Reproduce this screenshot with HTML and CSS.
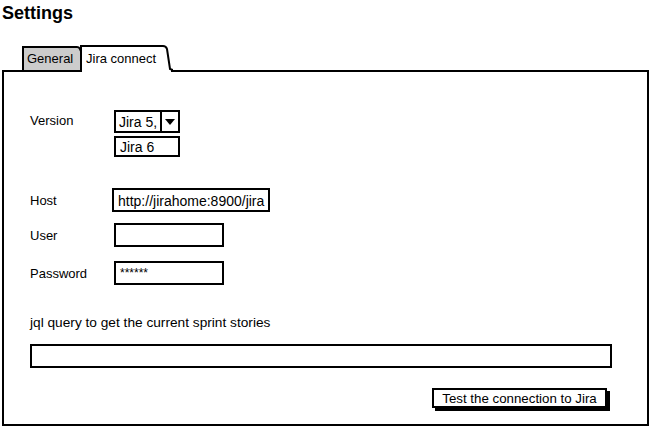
FILE: index.html
```html
<!DOCTYPE html>
<html>
<head>
<meta charset="utf-8">
<title>Settings</title>
<link rel="stylesheet" href="styles.css">
</head>
<body>
<h1 class="title">Settings</h1>
<div class="tabs">
  <div class="tab tab-general">
    <span class="tab-label">General</span>
    <svg class="tab-edge" width="8" height="24" viewBox="0 0 8 24"><polygon points="0,0 2,0 8,13 8,24 0,24" fill="#cccccc"/><path d="M0,1 Q2,1 3,3 L7,12" stroke="#000" stroke-width="2" fill="none"/></svg>
  </div>
  <div class="tab tab-active">
    <span class="tab-label">Jira connect</span>
    <svg class="tab-edge" width="10" height="27" viewBox="0 0 10 27"><polygon points="0,0 2,0 5,4 8,24 8,27 0,27" fill="#ffffff"/><path d="M0,1 Q3,1 4,4 L7,24 L10,25" stroke="#000" stroke-width="2" fill="none"/></svg>
  </div>
</div>
<div class="panel">
  <div class="row row-version">
    <span class="label label-top">Version</span>
    <div class="dropdown">
      <div class="select"><span class="select-value">Jira 5,</span><span class="select-btn"><svg width="10" height="6" viewBox="0 0 10 6"><polygon points="0,0 10,0 5,6" fill="#000"/></svg></span></div>
      <div class="list">Jira 6</div>
    </div>
  </div>
  <div class="row row-host">
    <span class="label">Host</span>
    <div class="field field-host">http://jirahome:8900/jira</div>
  </div>
  <div class="row row-user">
    <span class="label">User</span>
    <div class="field field-short"></div>
  </div>
  <div class="row row-pass">
    <span class="label">Password</span>
    <div class="field field-short field-pass">******</div>
  </div>
  <div class="jql-label">jql query to get the current sprint stories</div>
  <div class="field field-jql"></div>
  <div class="actions">
    <button class="btn">Test the connection to Jira</button>
  </div>
</div>
</body>
</html>
```

FILE: styles.css
```css
* { box-sizing: border-box; }
body {
  margin: 0;
  width: 651px;
  height: 430px;
  background: #fff;
  color: #000;
  font-family: "Liberation Sans", Arial, sans-serif;
  font-size: 13px;
  overflow: hidden;
}
.title {
  margin: 3px 0 0 2px;
  font-size: 18px;
  line-height: 20px;
  font-weight: bold;
  letter-spacing: 0;
}
.tabs {
  display: flex;
  align-items: flex-end;
  margin: 22px 0 0 22px;
  height: 25px;
}
.tab {
  display: flex;
  position: relative;
}
.tab-label {
  display: flex;
  align-items: center;
  border-top: 2px solid #000;
  border-left: 2px solid #000;
  padding: 0 1px 0 3px;
  line-height: 16px;
}
.tab-general { height: 24px; }
.tab-general .tab-label { background: #cccccc; width: 55px; padding-bottom: 1px; }
.tab-active {
  height: 27px;
  margin-left: -5px;
  margin-bottom: -2px;
  z-index: 1;
}
.tab-active .tab-label { background: #fff; width: 83px; padding-left: 4px; padding-bottom: 2px; }
.tab-edge { display: block; }
.panel {
  margin: 0 2px;
  height: 356px;
  border: 2px solid #000;
  padding: 38px 0 0 26px;
}
.row {
  display: flex;
  align-items: center;
}
.label {
  width: 84px;
  line-height: 16px;
  padding-top: 2px;
}
.row-version { align-items: flex-start; }
.label-top { padding-top: 3px; }
.dropdown {
  display: flex;
  flex-direction: column;
  gap: 3px;
}
.select {
  display: flex;
  width: 66px;
  height: 23px;
  border: 2px solid #000;
  font-size: 14px;
}
.select-value {
  flex: 1;
  padding-left: 3px;
  line-height: 20px;
}
.select-btn {
  width: 18px;
  border-left: 2px solid #000;
  display: flex;
  align-items: center;
  justify-content: center;
}
.list {
  width: 66px;
  height: 21px;
  border: 2px solid #000;
  padding-left: 4px;
  line-height: 18px;
  font-size: 14px;
}
.field {
  height: 24px;
  border: 2px solid #000;
  background: #fff;
  padding-left: 4px;
  line-height: 22px;
  font-size: 14px;
}
.row-host { margin-top: 31px; }
.field-host { width: 158px; margin-left: -2px; }
.row-user { margin-top: 11px; }
.field-short { width: 110px; }
.row-pass { margin-top: 14px; }
.field-pass { line-height: 14px; font-size: 12px; padding-top: 3px; }
.jql-label {
  margin-top: 30px;
  line-height: 16px;
  font-size: 13.7px;
}
.field-jql {
  margin-top: 13px;
  width: 582px;
}
.actions {
  width: 581px;
  display: flex;
  justify-content: flex-end;
  margin-top: 20px;
}
.btn {
  width: 175px;
  height: 20px;
  margin-right: 4px;
  border: 2px solid #000;
  background: #fff;
  box-shadow: 3px 3px 0 #000;
  font-family: inherit;
  font-size: 13.3px;
  color: #000;
  padding: 0;
  line-height: 18px;
}
```
